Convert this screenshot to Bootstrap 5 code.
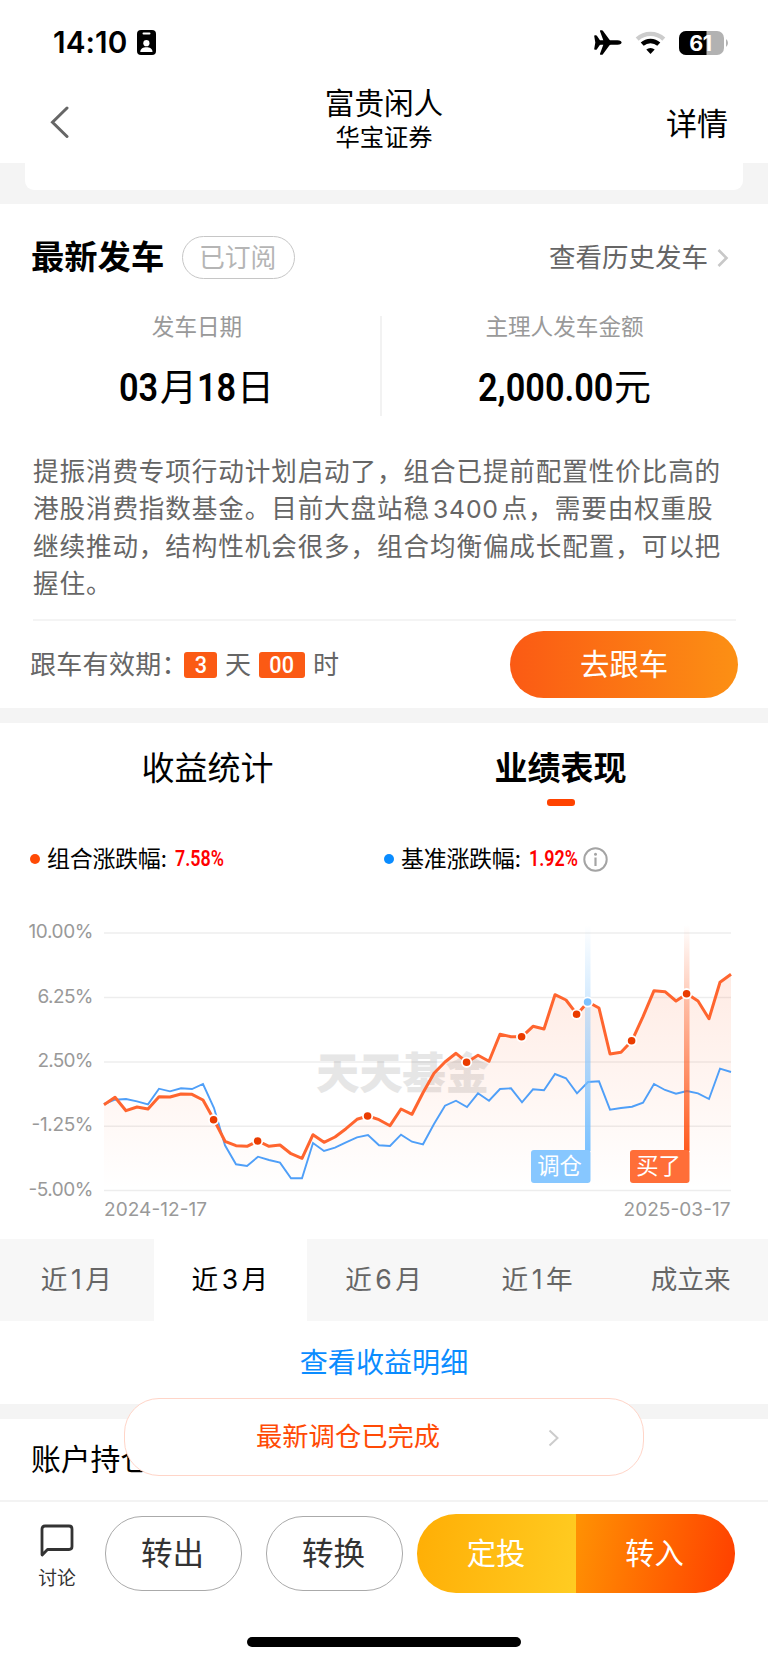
<!DOCTYPE html>
<html lang="zh-CN">
<head>
<meta charset="utf-8">
<meta name="viewport" content="width=device-width, initial-scale=1">
<title>富贵闲人</title>
<link href="https://cdn.jsdelivr.net/npm/bootstrap@5.3.0/dist/css/bootstrap.min.css" rel="stylesheet">
<style>
  body{font-family:"Inter","Noto Sans CJK SC",sans-serif;color:#000;background:#fff;line-height:1;width:768px;height:1663px;overflow:hidden}
  .statusbar{height:84px;padding:4px 39px 3px 53px}
  .clock{font-size:29.7px;font-weight:600;letter-spacing:.1px;margin-right:10px}
  .titlebar{height:79px;padding:0 40px 0 50px}
  .t-name{font-size:29.6px;line-height:34px}
  .t-org{font-size:24.3px;line-height:34px}
  .t-more{font-size:31px;width:102px;text-align:right}
  .gap-strip{background:#f4f4f4}
  .card-end{height:27px;margin:0 25px;background:#fff;border-radius:0 0 9px 9px}
  .sec-head{height:107px;padding:0 38px 0 31px}
  .sec-title{font-size:33.3px;font-weight:700}
  .sub-tag{width:113px;height:43px;border:1.5px solid #c6c6c6;border-radius:22px;color:#b5b5b5;font-size:25.8px;margin-left:18px;padding-right:2px}
  .hist{font-size:26.5px;color:#666}
  .stat-row{height:100px}
  .stat-row .lbl{font-size:22.6px;color:#999;line-height:22px;margin-top:0}
  .amt{font-size:37px;line-height:38px;margin-top:31px}
  .din{font-family:"Roboto",sans-serif;font-weight:600;display:inline-block;transform-origin:0 50%;white-space:nowrap}
  .din-lg{font-size:39px;transform:scaleX(.88)}
  .din-sm{font-size:22.8px;color:#f00;transform:scaleX(.785);width:50px}
  .vline{width:2px;background:#f2f2f2}
  .note{font-size:25.6px;letter-spacing:.87px;line-height:37.1px;color:#666;margin:37px 0 0 33px}
  .note .num{letter-spacing:.8px;margin:0 3px;font-size:24.8px}
  .rule-line{height:1.5px;background:#f4f4f4;margin:17px 32px 0 33px}
  .follow{height:88px;padding:0 30px 0 30px;color:#666;font-size:26px}
  .tbox{background:#fb5a14;color:#fff;height:26px;border-radius:3px;font:500 24px "Roboto",sans-serif}
  .tbox span{transform:scaleX(.9)}
  .go-btn{width:228px;height:67px;border-radius:34px;background:linear-gradient(90deg,#fb5a14,#fc9014);color:#fff;font-size:29.4px}
  .tabs-top{height:86px;padding:0 31px}
  .tabs-top>div{font-size:33px;line-height:36px;padding-top:27px}
  .tab-bar{width:28px;height:6.5px;border-radius:3px;background:#ff4300;margin-top:13px}
  .legend-row{height:56px;margin-top:22px;padding-left:30px;font-size:23px}
  .lname{letter-spacing:-.3px;width:128px}
  .dot{width:10px;height:10px;border-radius:50%;margin-right:7px}
  .periods{height:82px;background:#f7f7f7;color:#666;font-size:26.6px}
  .periods>div{flex:1 1 0;padding:0 1px 1px 0}
  .periods .active{background:#fff;color:#000}
  .periods i{font-style:normal;margin:0 3.5px}
  .detail{height:83px;padding-top:2px;color:#0a8cff;font-size:28.1px}
  .hold{height:81px;padding-left:31px;font-size:29.8px}
  .toast-pill{position:absolute;left:124px;top:1398px;width:520px;height:78px;border:1.5px solid #ffd5c8;border-radius:35px;background:#fff;color:#ff4a05;font-size:26.3px;padding:1px 0 0 131px}
  .footbar{border-top:2px solid #f3f3f3;height:163px;padding:12px 33px 0 38px}
  .talk{width:38px;font-size:18.8px;color:#333}
  .out-btn{width:137px;height:75px;border:1.3px solid #aaa;border-radius:37px;color:#333;font-size:31.6px;padding-right:2px}
  .duo{width:318px;height:79px;border-radius:39px;overflow:hidden;color:#fff;font-size:29.3px}
  .duo .a{background:linear-gradient(100deg,#ffae05,#ffcc22)}
  .duo .b{background:linear-gradient(100deg,#ff9203,#ff4300 95%)}
  .home{width:274px;height:10px;border-radius:5px;background:#000;margin:44px 0 0 209px}
  .chart text{font-family:"Inter","Noto Sans CJK SC",sans-serif}
</style>
</head>
<body class="position-relative text-nowrap">

<div class="statusbar d-flex align-items-center">
  <span class="clock">14:10</span>
  <svg width="19" height="25" viewBox="0 0 19 25"><rect width="19" height="25" rx="4"/><rect x="5.5" y="2.4" width="8" height="2" rx="1" fill="#fff"/><circle cx="9.4" cy="13.2" r="3.1" fill="#fff"/><path d="M3.3 22c0-3.6 3-4.8 6.1-4.8s6.1 1.2 6.1 4.8z" fill="#fff"/></svg>
  <svg class="ms-auto" width="28" height="25" viewBox="0 0 28 25"><path d="M.2 5.9Q.2 5.2 1 5.2h.9q.6 0 1 .5L5.600 9.700Q6 10.300 6.600 10.300H9.300L6 1.200Q5.700.2 6.600.2H7.900Q8.500.2 8.900.7L15.500 9.700Q16 10.300 16.700 10.300H23.500Q27.600 10.700 27.600 12.500T23.500 14.700H16.700Q16 14.700 15.500 15.300L8.900 24.300Q8.500 24.800 7.900 24.800H6.600Q5.700 24.800 6 23.800L9.300 14.700H6.600Q6 14.700 5.600 15.300L2.900 19.300Q2.500 19.800 1.900 19.800H1Q.2 19.800.2 19.100L1.300 12.500z"/></svg>
  <svg style="margin-left:13px" width="31" height="24" viewBox="0 0 31 24"><path d="M2.200 8.100a19.500 19.500 0 0 1 26.600 0" fill="none" stroke="#ccc" stroke-width="4.400"/><path d="M7.200 13.200a12.200 12.200 0 0 1 16.600 0" fill="none" stroke="#000" stroke-width="4.400"/><path d="M15.500 23l-4.200-4.400a6.200 6.200 0 0 1 8.400 0z"/></svg>
  <svg style="margin-left:13px" width="50" height="24" viewBox="0 0 50 24"><defs><clipPath id="bat"><rect width="45" height="24" rx="7"/></clipPath></defs><g clip-path="url(#bat)"><rect width="45" height="24" fill="#b2b2b2"/><rect width="27.500" height="24"/></g><path d="M47 8q2 1.500 2 4t-2 4z" fill="#b2b2b2"/><text x="21.500" y="19.500" text-anchor="middle" font-family="Inter" font-size="21.500" font-weight="700" letter-spacing="-.3" fill="#fff">61</text></svg>
</div>

<div class="titlebar d-flex justify-content-between">
  <div style="width:103px;padding-top:22px"><svg width="20" height="32" viewBox="0 0 20 32"><path d="M17 2L2.500 16.300 17 30.500" fill="none" stroke="#666" stroke-width="3" stroke-linecap="round"/></svg></div>
  <div class="text-center" style="padding-top:2px;margin-right:11px"><div class="t-name">富贵闲人</div><div class="t-org">华宝证券</div></div>
  <div class="t-more" style="padding-top:24px">详情</div>
</div>

<div class="gap-strip" style="height:41px"><div class="card-end"></div></div>

<section style="height:504px">
  <div class="sec-head d-flex align-items-center">
    <span class="sec-title">最新发车</span>
    <span class="sub-tag d-flex align-items-center justify-content-center">已订阅</span>
    <span class="hist ms-auto">查看历史发车</span>
    <svg style="margin-left:9px" width="13" height="20" viewBox="0 0 13 20"><path d="M1.500 2l8 8-8 8" fill="none" stroke="#c8c8c8" stroke-width="2.600"/></svg>
  </div>
  <div class="stat-row d-flex" style="margin-top:5px">
    <div class="text-center" style="width:380px;padding-left:14px"><div class="lbl">发车日期</div>
      <div class="amt d-flex" style="margin-left:105px"><span class="din din-lg" style="width:41px">03</span><span>月</span><span class="din din-lg" style="width:40px">18</span><span>日</span></div></div>
    <div class="vline"></div>
    <div class="text-center" style="width:365px"><div class="lbl">主理人发车金额</div>
      <div class="amt d-flex" style="margin-left:96px"><span class="din din-lg" style="width:136px">2,000.00</span><span>元</span></div></div>
  </div>
  <div class="note">提振消费专项行动计划启动了，组合已提前配置性价比高的<br>港股消费指数基金。目前大盘站稳<span class="num">3400</span>点，需要由权重股<br>继续推动，结构性机会很多，组合均衡偏成长配置，可以把<br>握住。</div>
  <div class="rule-line"></div>
  <div class="follow d-flex align-items-center">
    <span style="width:154px;letter-spacing:.3px">跟车有效期：</span>
    <span class="tbox d-flex align-items-center justify-content-center" style="width:33px"><span>3</span></span>
    <span style="margin:0 8px">天</span>
    <span class="tbox d-flex align-items-center justify-content-center" style="width:46px"><span>00</span></span>
    <span style="margin-left:8px">时</span>
    <span class="go-btn ms-auto d-flex align-items-center justify-content-center">去跟车</span>
  </div>
</section>

<div class="gap-strip" style="height:15px"></div>

<div class="tabs-top d-flex">
  <div class="w-50 d-flex flex-column align-items-center">收益统计</div>
  <div class="w-50 d-flex flex-column align-items-center fw-bold">业绩表现<div class="tab-bar"></div></div>
</div>

<div class="legend-row d-flex align-items-center">
  <div class="d-flex align-items-center" style="width:354px"><span class="dot" style="background:#ff4a05"></span><span class="lname">组合涨跌幅:</span><span class="din din-sm">7.58%</span></div>
  <div class="d-flex align-items-center"><span class="dot" style="background:#0a8cff"></span><span class="lname">基准涨跌幅:</span><span class="din din-sm">1.92%</span>
    <svg style="margin-left:4px" width="25" height="25" viewBox="0 0 25 25"><circle cx="12.500" cy="12.500" r="11.200" fill="none" stroke="#a4a4a4" stroke-width="2"/><circle cx="12.500" cy="7.300" r="1.500" fill="#a4a4a4"/><path d="M12.500 10.500v8.500" stroke="#a4a4a4" stroke-width="2.200"/></svg></div>
</div>

<svg class="chart d-block" width="768" height="352" viewBox="0 887 768 352">
  <defs>
    <linearGradient id="area" x1="0" y1="974" x2="0" y2="1190" gradientUnits="userSpaceOnUse"><stop offset="0" stop-color="#ff5a1e" stop-opacity=".12"/><stop offset="1" stop-color="#ff5a1e" stop-opacity="0"/></linearGradient>
    <linearGradient id="barB" x1="0" y1="0" x2="0" y2="1"><stop offset="0" stop-color="#7cc2ff" stop-opacity="0"/><stop offset="1" stop-color="#7cc2ff"/></linearGradient>
    <linearGradient id="barR" x1="0" y1="0" x2="0" y2="1"><stop offset="0" stop-color="#ff5a1e" stop-opacity="0"/><stop offset="1" stop-color="#ff5a1e"/></linearGradient>
  </defs>
  <text x="316" y="1089" font-size="43.500" font-weight="900" fill="#e6e6e6" textLength="173">天天基金</text>
  <path d="M104 933H731M104 997.500H731M104 1062H731M104 1126.200H731M104 1190.500H731" stroke="#000" stroke-opacity=".07" stroke-width="1.500"/>
  <g font-size="19" fill="#999" text-anchor="end">
    <text x="93.500" y="938" textLength="65">10.00%</text><text x="93.500" y="1002.500" textLength="56">6.25%</text><text x="93.500" y="1067" textLength="56">2.50%</text><text x="93.500" y="1131" textLength="62">-1.25%</text><text x="93.500" y="1195.500" textLength="65">-5.00%</text>
    <text x="104" y="1216" text-anchor="start" textLength="103">2024-12-17</text><text x="730.500" y="1216" textLength="107">2025-03-17</text>
  </g>
  <g id="plot"></g>
  <rect x="585" y="925" width="5.500" height="226" fill="url(#barB)"/>
  <rect x="684" y="925" width="5.500" height="226" fill="url(#barR)"/>
  <g id="dots" stroke="#fff" stroke-width="1.800"></g>
  <rect x="531" y="1150" width="59.500" height="33" rx="3" fill="#87c7ff"/>
  <rect x="630" y="1150" width="59.500" height="33" rx="3" fill="#ff6e38"/>
  <g font-size="22.300" fill="#fff" text-anchor="middle"><text x="559.500" y="1174">调仓</text><text x="658.500" y="1174">买了</text></g>
</svg>

<div class="periods d-flex text-center">
  <div class="d-flex align-items-center justify-content-center">近<i>1</i>月</div>
  <div class="active d-flex align-items-center justify-content-center">近<i>3</i>月</div>
  <div class="d-flex align-items-center justify-content-center">近<i>6</i>月</div>
  <div class="d-flex align-items-center justify-content-center">近<i>1</i>年</div>
  <div class="d-flex align-items-center justify-content-center">成立来</div>
</div>
<div class="detail d-flex align-items-center justify-content-center">查看收益明细</div>
<div class="gap-strip" style="height:15px"></div>
<div class="hold d-flex align-items-center">账户持仓</div>

<div class="footbar">
  <div class="d-flex align-items-center">
    <div class="talk text-center" style="padding-top:6px"><svg class="d-block mx-auto" width="34" height="34" viewBox="0 0 34 34"><path d="M2 30.500V5Q2 2 5 2H29Q32 2 32 5V22.500Q32 25.500 29 25.500H7.500L2.200 31z" fill="none" stroke="#333" stroke-width="2.800" stroke-linejoin="round"/></svg><div style="margin-top:12px">讨论</div></div>
    <span class="out-btn d-flex align-items-center justify-content-center" style="margin-left:29px">转出</span>
    <span class="out-btn d-flex align-items-center justify-content-center" style="margin-left:24px">转换</span>
    <div class="duo d-flex ms-auto"><span class="a w-50 d-flex align-items-center justify-content-center" style="padding-right:1px">定投</span><span class="b w-50 d-flex align-items-center justify-content-center" style="padding-right:2px">转入</span></div>
  </div>
  <div class="home"></div>
</div>

<div class="toast-pill d-flex align-items-center">最新调仓已完成<svg style="margin-left:108px" width="12" height="18" viewBox="0 0 12 18"><path d="M1.500 1.500L9.500 9l-8 7.500" fill="none" stroke="#ccc" stroke-width="2"/></svg></div>

<script src="https://cdn.jsdelivr.net/npm/bootstrap@5.3.0/dist/js/bootstrap.bundle.min.js"></script>
<script>
  // Daily values, in thirds of a pixel below y = 910; one trading day is 11px wide
  const fund=[584,562,602,591,597,560,561,552,553,570,629,694,707,709,693,709,705,731,745,674,697,681,656,628,618,629,647,597,613,548,490,456,430,457,436,454,373,380,380,349,357,254,270,313,276,294,432,427,392,320,242,245,273,251,273,326,217,193];
  const base=[582,569,567,574,583,536,544,535,537,522,594,706,763,768,740,750,758,805,805,699,723,713,697,682,675,706,708,674,695,703,642,587,572,591,550,572,537,535,577,538,541,492,505,550,516,514,599,594,590,578,522,540,551,543,550,567,476,486];
  const px=i=>104+i*11, py=v=>(910+v/3).toFixed(1);
  const line=a=>a.map((v,i)=>px(i)+','+py(v)).join(' ');
  document.getElementById('plot').innerHTML=
    `<polygon points="104,1190 ${line(fund)} 731,1190" fill="url(#area)"/>`+
    `<polyline points="${line(base)}" fill="none" stroke="#4f9ff8" stroke-width="1.9"/>`+
    `<polyline points="${line(fund)}" fill="none" stroke="#ff652f" stroke-width="3" stroke-linejoin="round"/>`;
  document.getElementById('dots').innerHTML=[10,14,24,33,38,43,44,48,53].map(i=>
    `<circle cx="${px(i)-.4}" cy="${py(fund[i])}" r="4.700" fill="${i===44?'#7cc2ff':'#ea3c00'}"/>`).join('');
</script>
</body>
</html>
